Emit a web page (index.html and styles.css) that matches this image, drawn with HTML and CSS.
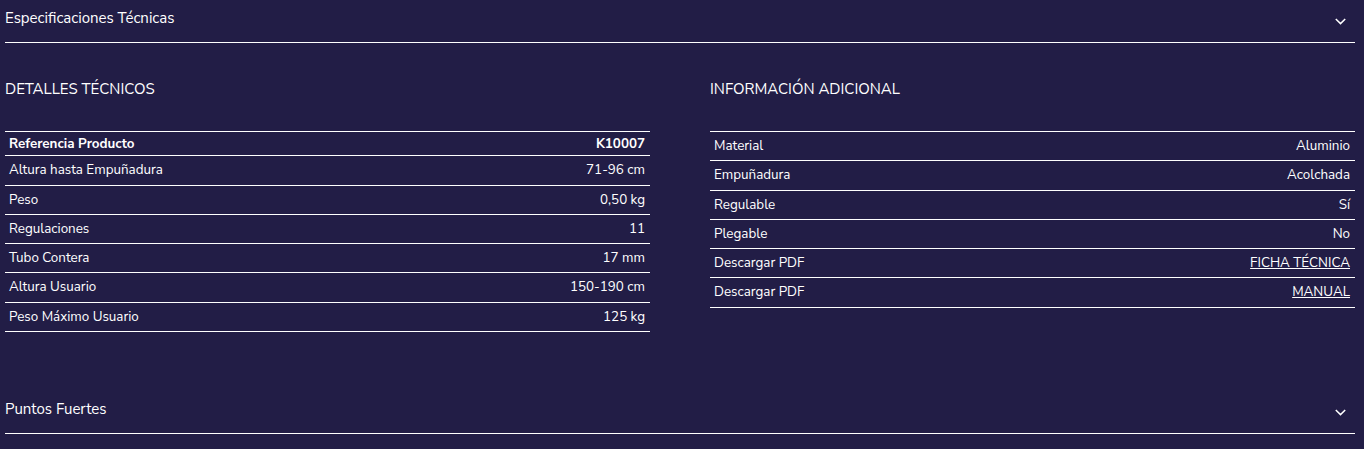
FILE: index.html
```html
<!DOCTYPE html>
<html lang="es">
<head>
<meta charset="utf-8">
<link rel="stylesheet" href="styles.css">
</head>
<body>
<div class="page">
  <section class="acc">
    <div class="acc-head">
      <span class="acc-title">Especificaciones Técnicas</span>
      <svg class="chev" width="11" height="7" viewBox="0 0 11 7"><path d="M0.8 1 L5.5 5.6 L10.2 1" fill="none" stroke="#fff" stroke-width="1.5"/></svg>
    </div>
    <div class="acc-body">
      <div class="col">
        <h3 class="col-title">DETALLES TÉCNICOS</h3>
        <table class="spec">
          <tr class="first"><th>Referencia Producto</th><th class="r">K10007</th></tr>
          <tr><td>Altura hasta Empuñadura</td><td class="r">71-96 cm</td></tr>
          <tr><td>Peso</td><td class="r">0,50 kg</td></tr>
          <tr><td>Regulaciones</td><td class="r">11</td></tr>
          <tr><td>Tubo Contera</td><td class="r">17 mm</td></tr>
          <tr><td>Altura Usuario</td><td class="r">150-190 cm</td></tr>
          <tr><td>Peso Máximo Usuario</td><td class="r">125 kg</td></tr>
        </table>
      </div>
      <div class="col">
        <h3 class="col-title">INFORMACIÓN ADICIONAL</h3>
        <table class="spec">
          <tr><td>Material</td><td class="r">Aluminio</td></tr>
          <tr><td>Empuñadura</td><td class="r">Acolchada</td></tr>
          <tr><td>Regulable</td><td class="r">Sí</td></tr>
          <tr><td>Plegable</td><td class="r">No</td></tr>
          <tr><td>Descargar PDF</td><td class="r"><a href="#" class="pdf">FICHA TÉCNICA</a></td></tr>
          <tr><td>Descargar PDF</td><td class="r"><a href="#" class="pdf">MANUAL</a></td></tr>
        </table>
      </div>
    </div>
  </section>
  <section class="acc">
    <div class="acc-head">
      <span class="acc-title">Puntos Fuertes</span>
      <svg class="chev" width="11" height="7" viewBox="0 0 11 7"><path d="M0.8 1 L5.5 5.6 L10.2 1" fill="none" stroke="#fff" stroke-width="1.5"/></svg>
    </div>
  </section>
</div>
</body>
</html>
```

FILE: styles.css
```css
html, body {
  margin: 0;
  padding: 0;
  background: #221d46;
  color: #fff;
  font-family: "Nunito Sans", Lato, "Noto Sans", sans-serif;
}
.page {
  padding: 0 9px 0 5px;
}
.acc-head {
  display: flex;
  justify-content: space-between;
  align-items: center;
  padding: 7px 0 13px;
  border-bottom: 1px solid #fff;
}
.acc-title {
  font-size: 15px;
  line-height: 22px;
}
.chev {
  margin-right: 9px;
  margin-top: 6px;
}
.acc-body {
  display: grid;
  grid-template-columns: 645px 645px;
  column-gap: 60px;
  padding: 36px 0 59px;
}
.col-title {
  margin: 0 0 32px;
  font-size: 15px;
  line-height: 20px;
  font-weight: 400;
}
.spec {
  width: 100%;
  border-collapse: collapse;
  border-top: 1px solid #fff;
  font-size: 13.4px;
}
.spec td, .spec th {
  padding: 4px 5px 4px 4px;
  line-height: 20.3px;
  border-bottom: 1px solid #fff;
  text-align: left;
  font-weight: 400;
}
.spec tr.first th {
  font-weight: 700;
  padding: 2px 5px 1px 4px;
}
.spec .r {
  text-align: right;
}
.pdf {
  color: #fff;
  text-decoration: underline;
}
```
